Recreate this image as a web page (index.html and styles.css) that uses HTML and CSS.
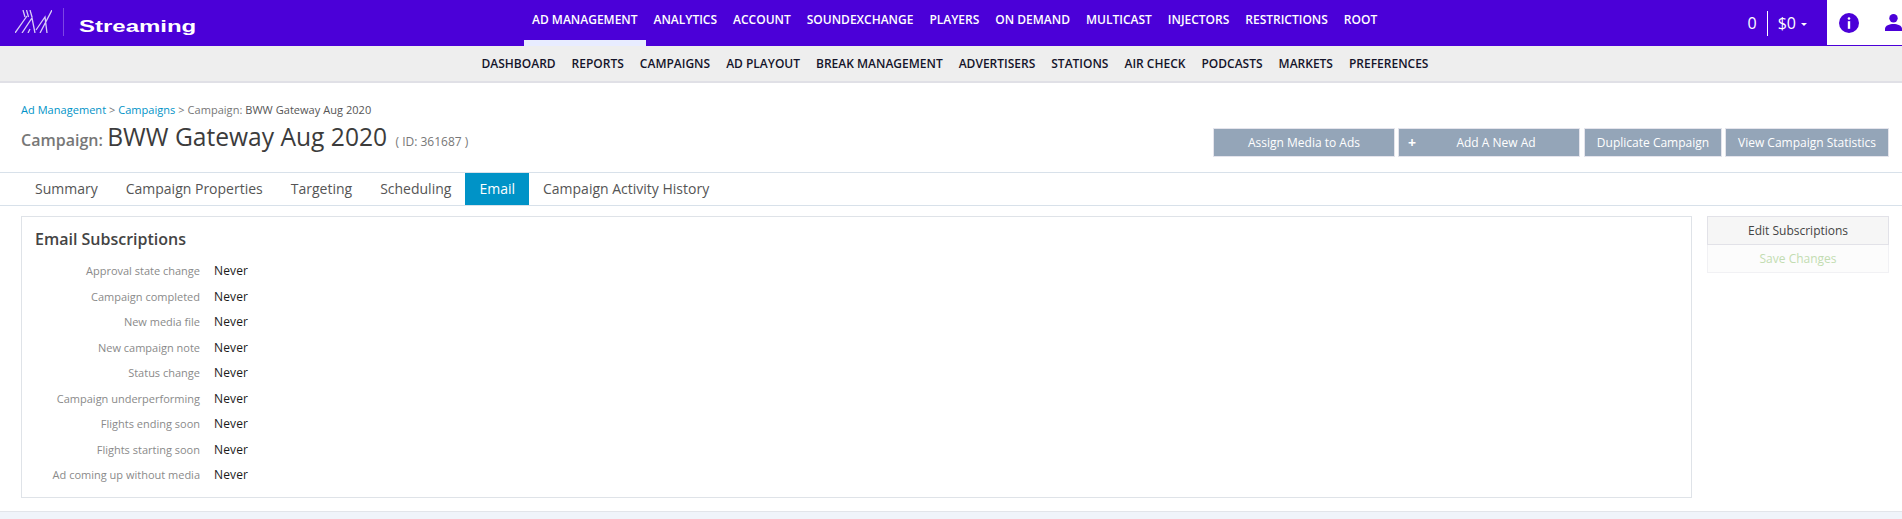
FILE: index.html
```html
<!DOCTYPE html>
<html lang="en">
<head>
    <meta charset="UTF-8">
    <meta name="viewport" content="width=device-width, initial-scale=1.0">
    <title>Campaign: BWW Gateway Aug 2020</title>
    <link rel="stylesheet" href="styles.css">
</head>
<body>
    <header class="top-bar">
        <div class="brand">
            <svg class="brand-logo" width="37" height="23" viewBox="0 0 37 23" fill="none" stroke="#d9ccf7" stroke-width="1.3">
                <path d="M8 0L10 7M11.5 0L13.5 7M15 0L17 7"/>
                <path d="M0 23L12 6M7 23L17 8L20 23M13 23L15 19"/>
                <path d="M21 20L30 7L32 23M25 23L37 0"/>
            </svg>
            <span class="brand-divider"></span>
            <span class="brand-name">Streaming</span>
        </div>
        <nav class="main-nav">
            <a class="active" href="#">Ad Management</a>
            <a href="#">Analytics</a>
            <a href="#">Account</a>
            <a href="#">SoundExchange</a>
            <a href="#">Players</a>
            <a href="#">On Demand</a>
            <a href="#">Multicast</a>
            <a href="#">Injectors</a>
            <a href="#">Restrictions</a>
            <a href="#">Root</a>
        </nav>
        <div class="totals">
            <span class="total-count">0</span>
            <span class="total-money">$0<i class="caret"></i></span>
        </div>
        <div class="top-icons">
            <svg width="20" height="20" viewBox="0 0 20 20">
                <circle cx="10" cy="10" r="10" fill="#4b00d8"/>
                <rect x="8.7" y="4.2" width="2.6" height="2.6" rx="1.3" fill="#fff"/>
                <rect x="8.8" y="8.2" width="2.4" height="7.6" fill="#fff"/>
            </svg>
            <svg class="user-icon" width="17" height="17" viewBox="0 0 17 17" fill="#4b00d8">
                <circle cx="8.5" cy="4.2" r="4.2"/>
                <path d="M0 17v-2.2C0 11.6 4.5 10 8.5 10s8.5 1.6 8.5 4.8V17z"/>
            </svg>
        </div>
    </header>

    <nav class="sub-nav">
        <a href="#">Dashboard</a>
        <a href="#">Reports</a>
        <a href="#">Campaigns</a>
        <a href="#">Ad Playout</a>
        <a href="#">Break Management</a>
        <a href="#">Advertisers</a>
        <a href="#">Stations</a>
        <a href="#">Air Check</a>
        <a href="#">Podcasts</a>
        <a href="#">Markets</a>
        <a href="#">Preferences</a>
    </nav>

    <section class="page-head">
        <div class="breadcrumb">
            <a href="#">Ad Management</a> &gt; <a href="#">Campaigns</a> &gt; Campaign: <span class="crumb-name">BWW Gateway Aug 2020</span>
        </div>
        <div class="title-row">
            <h1 class="page-title">
                <span class="title-label">Campaign:</span>
                BWW Gateway Aug 2020
                <span class="title-id">( ID: 361687 )</span>
            </h1>
            <div class="actions">
                <a class="btn btn-wide" href="#">Assign Media to Ads</a>
                <a class="btn btn-wide btn-add" href="#"><span class="plus">+</span>Add A New Ad</a>
                <a class="btn btn-duplicate" href="#">Duplicate Campaign</a>
                <a class="btn btn-stats" href="#">View Campaign Statistics</a>
            </div>
        </div>
    </section>

    <nav class="tabs">
        <a href="#">Summary</a>
        <a href="#">Campaign Properties</a>
        <a href="#">Targeting</a>
        <a href="#">Scheduling</a>
        <a class="active" href="#">Email</a>
        <a href="#">Campaign Activity History</a>
    </nav>

    <main class="content">
        <section class="panel">
            <h2>Email Subscriptions</h2>
            <div class="sub-row"><label>Approval state change</label><span>Never</span></div>
            <div class="sub-row"><label>Campaign completed</label><span>Never</span></div>
            <div class="sub-row"><label>New media file</label><span>Never</span></div>
            <div class="sub-row"><label>New campaign note</label><span>Never</span></div>
            <div class="sub-row"><label>Status change</label><span>Never</span></div>
            <div class="sub-row"><label>Campaign underperforming</label><span>Never</span></div>
            <div class="sub-row"><label>Flights ending soon</label><span>Never</span></div>
            <div class="sub-row"><label>Flights starting soon</label><span>Never</span></div>
            <div class="sub-row"><label>Ad coming up without media</label><span>Never</span></div>
        </section>
        <aside class="side-actions">
            <a class="side-btn" href="#">Edit Subscriptions</a>
            <a class="side-btn disabled" href="#">Save Changes</a>
        </aside>
    </main>

    <footer class="page-foot"></footer>
</body>
</html>
```

FILE: styles.css
```css
html, body {
    margin: 0;
    padding: 0;
}
body {
    font-family: "Open Sans", Arial, sans-serif;
    font-size: 13px;
    color: #333;
    background: #fff;
}
a {
    color: inherit;
    text-decoration: none;
}

/* top bar */
.top-bar {
    display: flex;
    height: 46px;
    background: #4b00d8;
    color: #fff;
}
.brand {
    display: flex;
    align-items: center;
    width: 524px;
    padding-left: 15px;
    box-sizing: border-box;
}
.brand-logo {
    margin-top: -3px;
}
.brand-divider {
    width: 1px;
    height: 28px;
    margin: 0 15px 2px 11px;
    background: #7d45e4;
}
.brand-name {
    display: inline-block;
    margin-top: 8px;
    font-family: "Liberation Sans", Arial, sans-serif;
    font-size: 17px;
    font-weight: bold;
    transform: scaleX(1.41);
    transform-origin: left center;
}
.main-nav {
    display: flex;
    flex: 1;
}
.main-nav a {
    height: 40px;
    padding: 0 8px;
    line-height: 39px;
    font-size: 12px;
    font-weight: 600;
    text-transform: uppercase;
    border-bottom: 6px solid transparent;
}
.main-nav a.active {
    border-bottom-color: #e8ecff;
}
.totals {
    display: flex;
    align-items: center;
    font-size: 16px;
    padding-right: 20px;
}
.total-count {
    padding-right: 10px;
    border-right: 1px solid #fff;
    line-height: 25px;
}
.total-money {
    padding-left: 10px;
}
.caret {
    display: inline-block;
    margin-left: 5px;
    vertical-align: middle;
    border-top: 3px solid #fff;
    border-left: 3px solid transparent;
    border-right: 3px solid transparent;
}
.top-icons {
    display: flex;
    align-items: center;
    box-sizing: border-box;
    width: 75px;
    height: 46px;
    padding-left: 12px;
    background: #fff;
    border-bottom: 1px solid #4b00d8;
}
.user-icon {
    margin-left: 26px;
    flex: none;
}

/* second level nav */
.sub-nav {
    display: flex;
    justify-content: center;
    height: 35px;
    padding-left: 8px;
    background: #eee;
    border-bottom: 2px solid #e0e0e6;
}
.sub-nav a {
    padding: 0 8px;
    line-height: 35px;
    font-size: 12px;
    font-weight: 600;
    color: #14142a;
    text-transform: uppercase;
}

/* page heading */
.page-head {
    height: 90px;
    padding: 19px 13px 0 21px;
    box-sizing: border-box;
    border-bottom: 1px solid #d8e1ea;
}
.breadcrumb {
    font-size: 11px;
    letter-spacing: 0.04px;
    line-height: 16px;
    color: #777;
}
.breadcrumb a {
    color: #0093c7;
}
.crumb-name {
    color: #555;
}
.title-row {
    display: flex;
    justify-content: space-between;
    align-items: flex-start;
}
.page-title {
    margin: 2px 0 0;
    font-size: 24.6px;
    line-height: 34px;
    font-weight: 400;
    color: #3c3c3c;
}
.title-label {
    margin-right: -2px;
    font-size: 16px;
    font-weight: 600;
    color: #777;
}
.title-id {
    margin-left: 2px;
    font-size: 12px;
    font-weight: 500;
    color: #777;
}
.actions {
    display: flex;
    gap: 3px;
    margin-top: 10px;
}
.btn {
    display: block;
    position: relative;
    box-sizing: border-box;
    height: 29px;
    line-height: 27px;
    text-align: center;
    font-size: 12px;
    color: #fff;
    background: #94a5b8;
    border: 1px solid #e4e4ec;
}
.btn-wide {
    width: 182px;
}
.btn-add {
    padding-left: 14px;
}
.btn-duplicate {
    width: 138px;
    margin-left: 1px;
}
.btn-stats {
    width: 164px;
}
.plus {
    position: absolute;
    left: 9px;
    font-weight: 700;
    font-size: 14px;
}

/* tabs */
.tabs {
    display: flex;
    box-sizing: border-box;
    height: 33px;
    padding-left: 21px;
    border-bottom: 1px solid #d8e1ea;
}
.tabs a {
    padding: 0 14px;
    line-height: 32px;
    font-size: 14px;
    color: #555;
}
.tabs a.active {
    background: #0093c7;
    color: #fff;
}

/* content */
.content {
    display: flex;
    align-items: flex-start;
    padding: 10px 13px 0 21px;
}
.panel {
    box-sizing: border-box;
    width: 1672px;
    height: 282px;
    padding: 11px 13px;
    border: 1px solid #dfe3e8;
}
.panel h2 {
    margin: 0 0 8px;
    font-size: 16px;
    line-height: 22px;
    font-weight: 600;
    color: #444;
}
.sub-row {
    display: flex;
    align-items: center;
    height: 25.5px;
}
.sub-row label {
    width: 165px;
    text-align: right;
    font-size: 11px;
    color: #8a8a8a;
}
.sub-row span {
    margin-left: 14px;
    font-size: 12px;
    font-weight: 500;
    letter-spacing: 0.15px;
    color: #1a1a1a;
}
.side-actions {
    width: 182px;
    margin-left: 15px;
}
.side-btn {
    display: block;
    box-sizing: border-box;
    height: 29px;
    line-height: 27px;
    text-align: center;
    font-size: 12px;
    color: #444;
    background: #f6f6f6;
    border: 1px solid #e2e2e8;
}
.side-btn.disabled {
    height: 28px;
    color: #c3dcb2;
    background: #fcfcfc;
    border-color: #f1f1f4;
    border-top: 0;
}
.page-foot {
    height: 8px;
    margin-top: 13px;
    background: #f0f4fa;
    border-top: 1px solid #e2e5ea;
}
```
